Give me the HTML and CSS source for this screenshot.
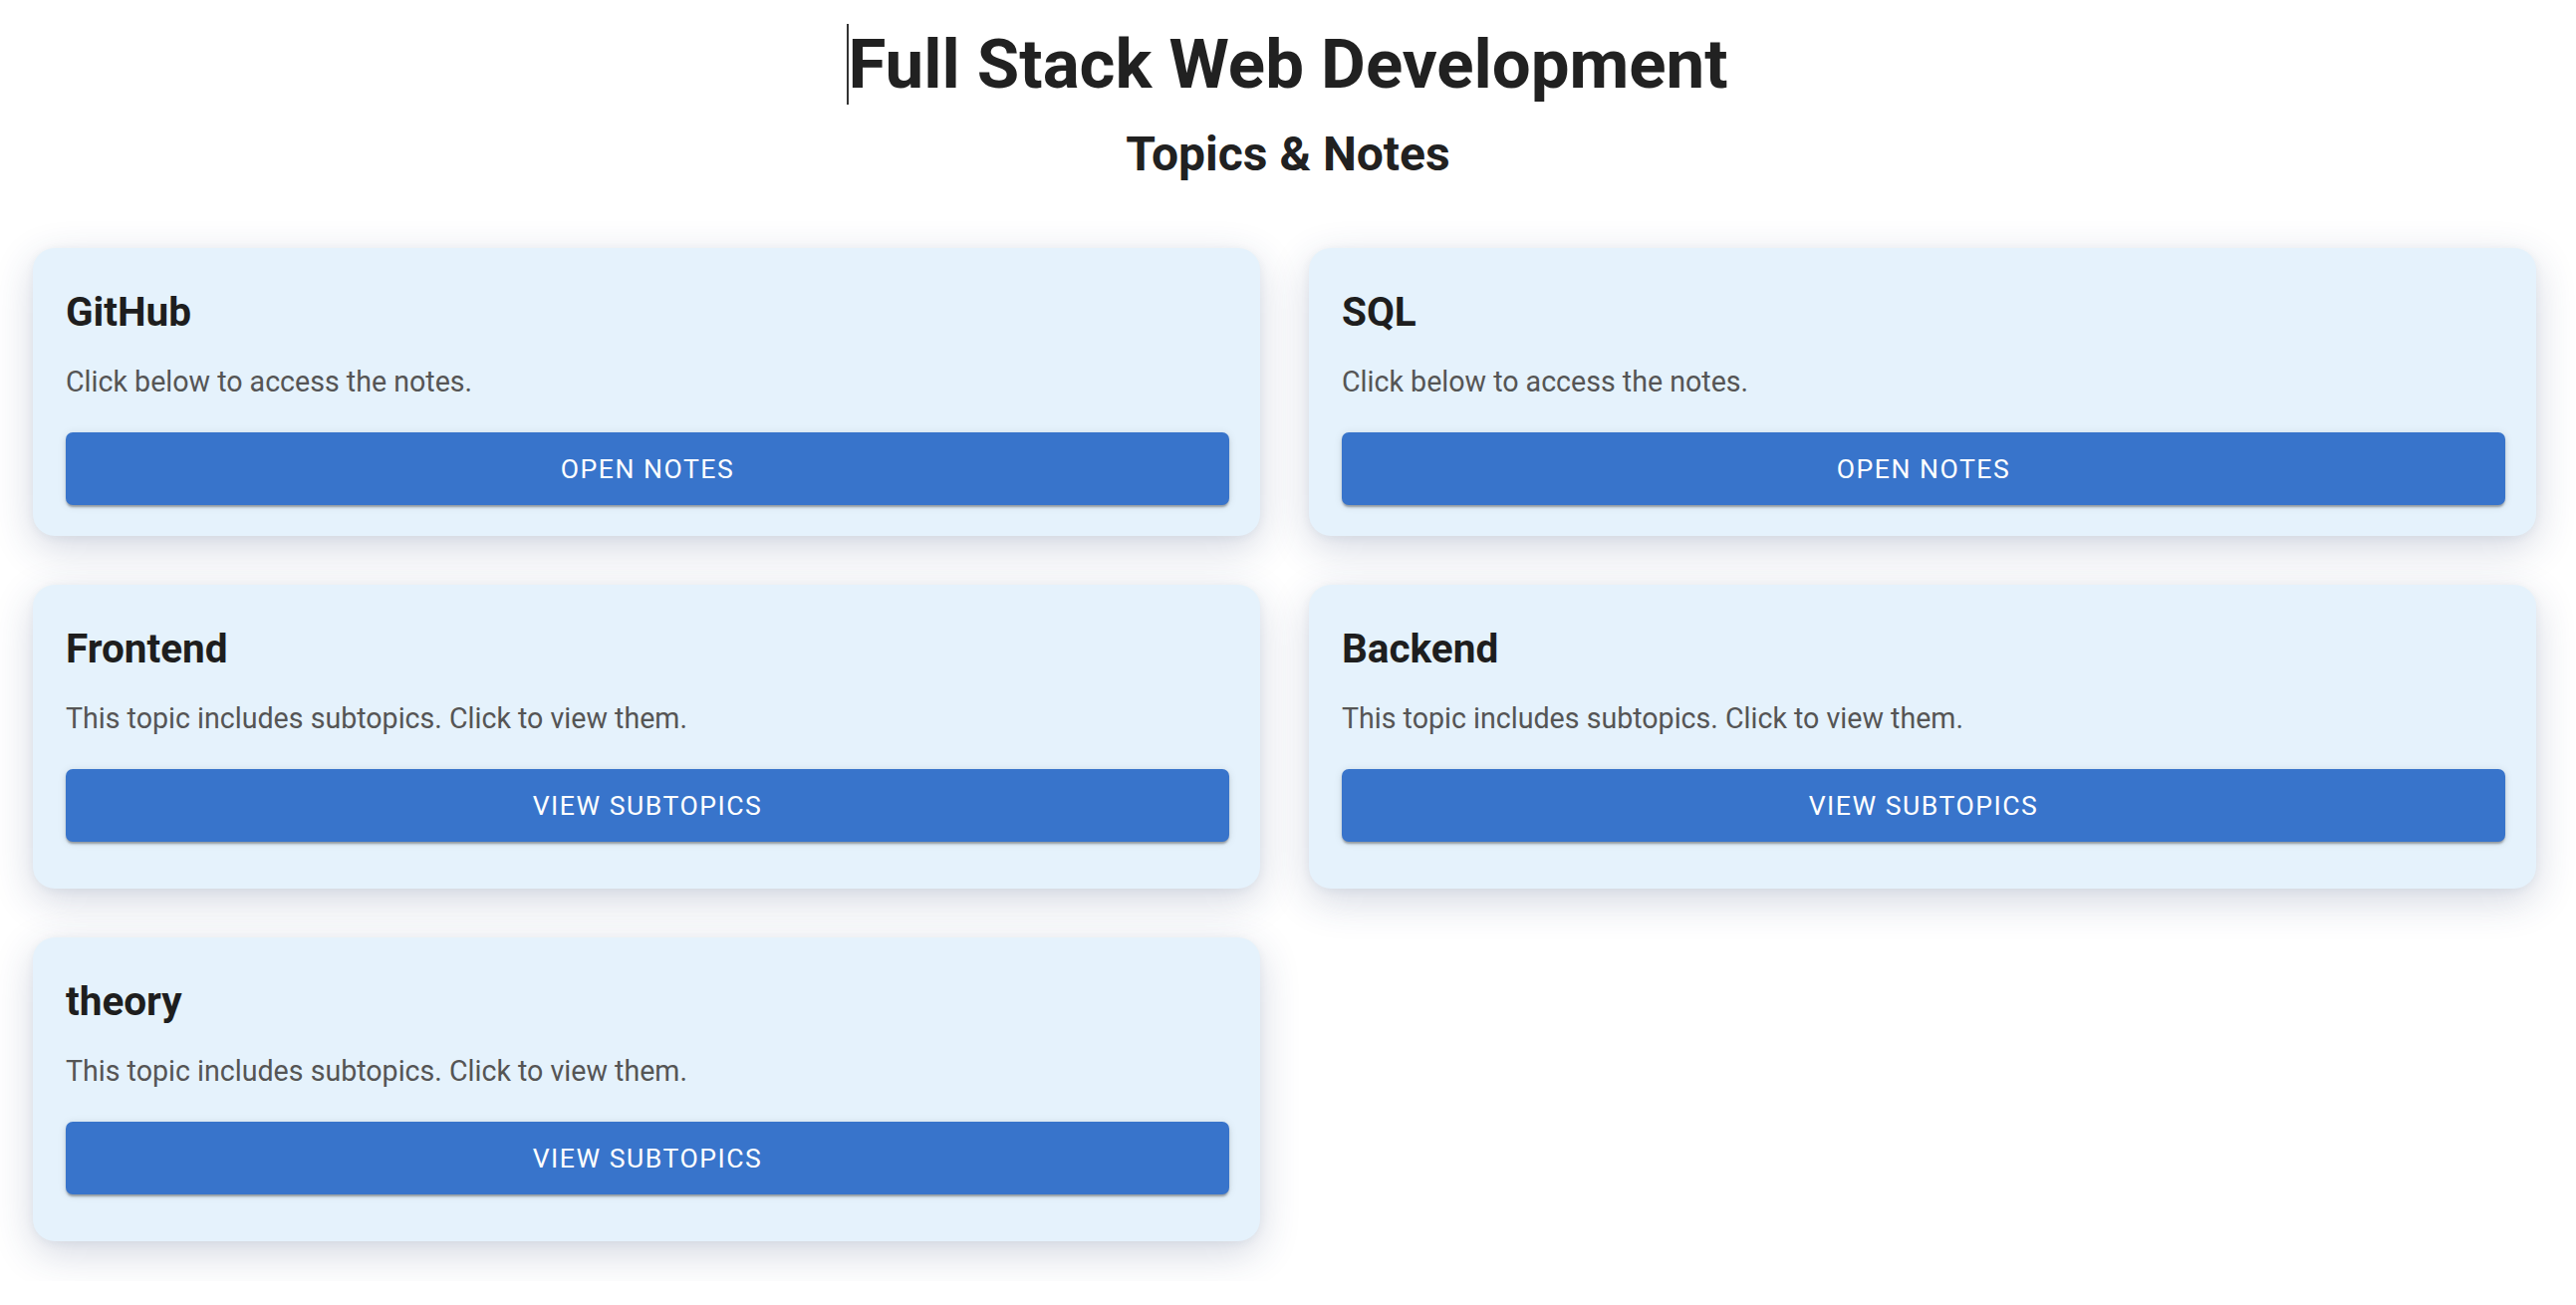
FILE: index.html
```html
<!DOCTYPE html>
<html lang="en">
<head>
<meta charset="utf-8">
<title>Full Stack Web Development</title>
<link rel="stylesheet" href="styles.css">
</head>
<body>
<header class="page-header">
  <h1 class="page-title"><span class="caret"></span>Full Stack Web Development</h1>
  <h2 class="page-subtitle">Topics &amp; Notes</h2>
</header>
<main class="topic-grid">
  <section class="card">
    <h3 class="card-title">GitHub</h3>
    <p class="card-text">Click below to access the notes.</p>
    <button class="card-button">Open Notes</button>
  </section>
  <section class="card">
    <h3 class="card-title">SQL</h3>
    <p class="card-text">Click below to access the notes.</p>
    <button class="card-button">Open Notes</button>
  </section>
  <section class="card">
    <h3 class="card-title">Frontend</h3>
    <p class="card-text">This topic includes subtopics. Click to view them.</p>
    <button class="card-button">View Subtopics</button>
    <div class="subtopics"></div>
  </section>
  <section class="card">
    <h3 class="card-title">Backend</h3>
    <p class="card-text">This topic includes subtopics. Click to view them.</p>
    <button class="card-button">View Subtopics</button>
    <div class="subtopics"></div>
  </section>
  <section class="card">
    <h3 class="card-title">theory</h3>
    <p class="card-text">This topic includes subtopics. Click to view them.</p>
    <button class="card-button">View Subtopics</button>
    <div class="subtopics"></div>
  </section>
</main>
</body>
</html>
```
FILE: styles.css
```css
html, body {
  margin: 0;
  padding: 0;
  background: #ffffff;
}
body {
  font-family: Roboto, "Noto Sans", "Liberation Sans", sans-serif;
  color: #212121;
}
.page-header {
  padding-top: 24px;
  text-align: center;
}
.page-title {
  margin: 0;
  font-size: 69px;
  font-weight: 700;
  line-height: 81px;
  color: #212121;
}
.caret {
  display: inline-block;
  width: 2px;
  height: 81px;
  margin-right: -1px;
  margin-left: -1px;
  background: #333;
  vertical-align: -17px;
}
.page-subtitle {
  margin: 22px 0 0;
  font-size: 48px;
  font-weight: 700;
  line-height: 56px;
  color: #212121;
}
.topic-grid {
  display: grid;
  grid-template-columns: 1fr 1fr;
  align-items: start;
  column-gap: 49px;
  row-gap: 49px;
  padding: 66px 40px 40px 33px;
}
.card {
  background: #e5f2fc;
  border-radius: 22px;
  padding: 41px 31px 31px 33px;
  box-shadow: 0 12px 40px rgba(40, 60, 110, 0.2), 0 2px 10px rgba(40, 60, 110, 0.06);
}
.card-title {
  margin: 0;
  font-size: 40.5px;
  font-weight: 700;
  line-height: 47px;
  color: #1e1e1e;
}
.card-text {
  margin: 29px 0 0;
  font-size: 28.6px;
  line-height: 34px;
  color: #555555;
}
.card-button {
  display: block;
  width: 100%;
  height: 73px;
  margin-top: 34px;
  border: none;
  border-radius: 7px;
  background: #3874cb;
  color: #ffffff;
  font-family: Roboto, "Noto Sans", "Liberation Sans", sans-serif;
  font-size: 26.6px;
  font-weight: 400;
  letter-spacing: 1.5px;
  text-transform: uppercase;
  box-shadow: 0 3px 2px -1px rgba(0, 0, 0, 0.22), 0 2px 3px rgba(0, 0, 0, 0.14), 0 1px 8px rgba(0, 0, 0, 0.1);
  cursor: pointer;
}
.subtopics {
  height: 16px;
}
```
